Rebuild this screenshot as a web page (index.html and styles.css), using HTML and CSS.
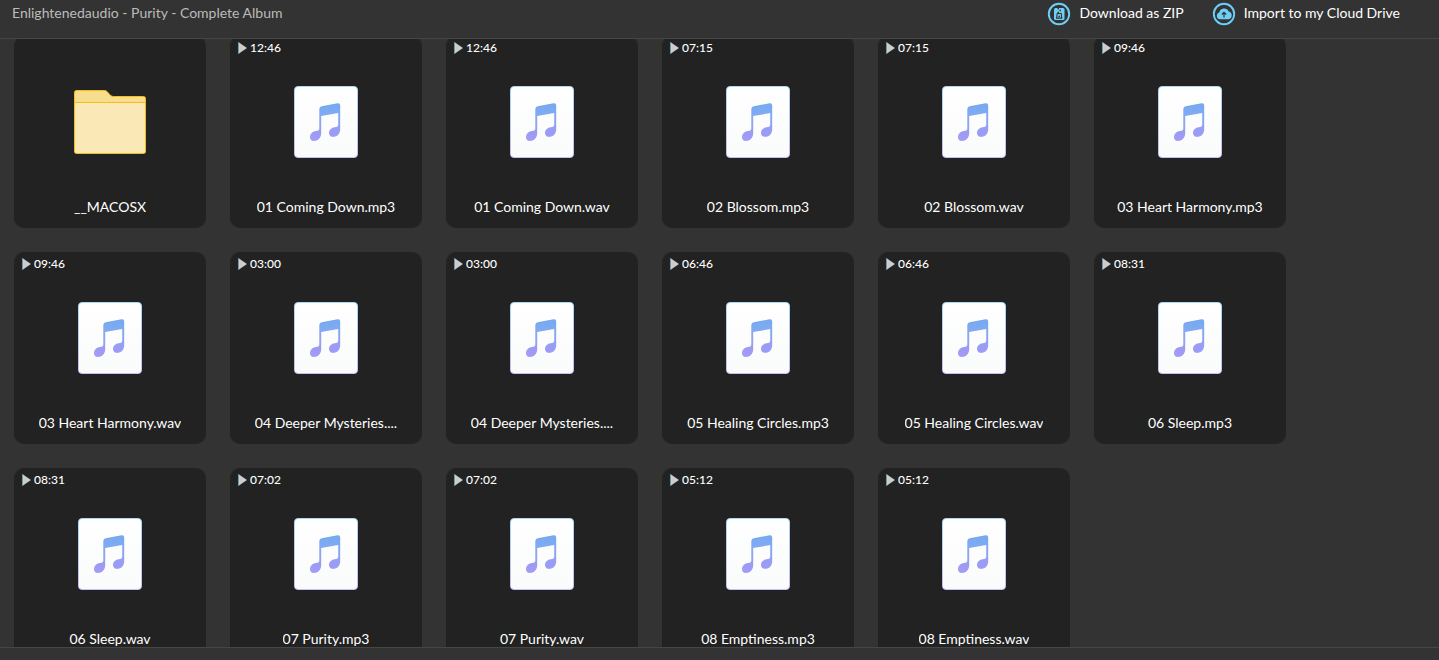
FILE: index.html
```html
<!DOCTYPE html>
<html lang="en">
<head>
<meta charset="utf-8">
<title>Enlightenedaudio - Purity - Complete Album</title>
<link rel="stylesheet" href="styles.css">
</head>
<body>
<svg class="sprite" aria-hidden="true">
  <defs>
    <linearGradient id="note-fill" gradientUnits="userSpaceOnUse" x1="0" y1="17" x2="0" y2="56">
      <stop offset="0" stop-color="#74aaf0"/>
      <stop offset="0.35" stop-color="#84aaf2"/>
      <stop offset="0.75" stop-color="#9b9bf5"/>
      <stop offset="1" stop-color="#a69af7"/>
    </linearGradient>
    <linearGradient id="page-edge" x1="0" y1="0" x2="0" y2="1">
      <stop offset="0" stop-color="#a9d8f5"/>
      <stop offset="1" stop-color="#c9bdf2"/>
    </linearGradient>
    <linearGradient id="page-fill" x1="0" y1="0" x2="0" y2="1">
      <stop offset="0" stop-color="#ffffff"/>
      <stop offset="1" stop-color="#fafbfb"/>
    </linearGradient>
  </defs>
  <symbol id="audio" viewBox="0 0 64 72">
    <rect x="0.5" y="0.5" width="63" height="71" rx="3.5" fill="url(#page-fill)" stroke="url(#page-edge)"/>
    <path fill="url(#note-fill)" d="M25.3 23.200q0-2.400 2.300-2.900L43.500 17.300q2.700-.4 2.700 2.100V43.500C46.200 48 43 50.800 39.400 50.800C36.500 50.800 35 49.300 35 46.900C35 44 37.300 41.700 40.500 41.200L42.400 40.900Q44.200 40.500 44.200 38.700V27L27.200 30.100V47C27.200 51.800 24 55 20 55C17.400 55 16 53.300 16 51.200C16 48 18.500 45.600 22 45.100L23.600 44.800Q25.300 44.400 25.300 42.600Z"/>
  </symbol>
  <symbol id="folder" viewBox="0 0 72 64">
    <path d="M.5 12.500V2.500Q.5.500 2.500.500H30.500C34.500.500 35 6.500 39.500 6.500H69.500Q71.500 6.500 71.500 8.500V12.500Z" fill="#f7dd8e"/>
    <path d="M.5 12.500H71.500V61.500Q71.500 63.500 69.500 63.500H2.500Q.5 63.500.5 61.500Z" fill="#fae9b7"/>
    <path d="M.5 12.500H71.500M.5 2.500Q.5.500 2.500.500H30.500C34.500.500 35 6.500 39.500 6.500H69.500Q71.500 6.500 71.500 8.500V61.500Q71.500 63.500 69.500 63.500H2.500Q.5 63.500.5 61.500Z" fill="none" stroke="#f4bd1b"/>
  </symbol>
  <symbol id="play" viewBox="0 0 9 12">
    <path d="M.3 0L9 6L.3 12Z" fill="#ccc"/>
    <path d="M.3.300V11.700" stroke="#4a9fca" stroke-width=".6"/>
  </symbol>
</svg>

<header class="topbar">
  <h1 class="album">Enlightenedaudio - Purity - Complete Album</h1>
  <div class="actions">
    <button class="action" type="button">
      <svg class="action-icon" viewBox="0 0 24 24" aria-hidden="true">
        <circle cx="12" cy="12" r="10.200" fill="none" stroke="#6dcff6" stroke-width="1.900"/>
        <rect x="7" y="6" width="10.500" height="12" rx="1.500" fill="#6dcff6"/>
        <path d="M10.500 6.500h1.500M12.500 8.500h1.500M10.500 10.500h1.500" stroke="#333" stroke-width="1.300"/>
        <path d="M10.200 11.500h4l.6 4.600h-5.200z" fill="none" stroke="#333" stroke-width="1.100"/>
        <path d="M11.400 14.400h1.600" stroke="#333" stroke-width="1.300"/>
      </svg>
      <span class="action-label">Download as ZIP</span>
    </button>
    <button class="action" type="button">
      <svg class="action-icon" viewBox="0 0 24 24" aria-hidden="true">
        <circle cx="12" cy="12" r="10.200" fill="none" stroke="#6dcff6" stroke-width="1.900"/>
        <path d="M8 17.300a3.500 3.500 0 0 1-.8-6.800A5 5 0 0 1 16.700 9.500a4 4 0 0 1-.2 7.800z" fill="#6dcff6"/>
        <path d="M12 15.500V10.500M9.800 12.500L12 10.300L14.200 12.500" fill="none" stroke="#333" stroke-width="1.200"/>
      </svg>
      <span class="action-label">Import to my Cloud Drive</span>
    </button>
  </div>
</header>

<main class="viewport">
  <ul class="grid">
    <li><a class="tile" href="#"><span class="time"></span><svg class="folder"><use href="#folder"/></svg><span class="name">__MACOSX</span></a></li>
    <li><a class="tile" href="#"><span class="time"><svg class="play"><use href="#play"/></svg>12:46</span><svg class="page"><use href="#audio"/></svg><span class="name">01 Coming Down.mp3</span></a></li>
    <li><a class="tile" href="#"><span class="time"><svg class="play"><use href="#play"/></svg>12:46</span><svg class="page"><use href="#audio"/></svg><span class="name">01 Coming Down.wav</span></a></li>
    <li><a class="tile" href="#"><span class="time"><svg class="play"><use href="#play"/></svg>07:15</span><svg class="page"><use href="#audio"/></svg><span class="name">02 Blossom.mp3</span></a></li>
    <li><a class="tile" href="#"><span class="time"><svg class="play"><use href="#play"/></svg>07:15</span><svg class="page"><use href="#audio"/></svg><span class="name">02 Blossom.wav</span></a></li>
    <li><a class="tile" href="#"><span class="time"><svg class="play"><use href="#play"/></svg>09:46</span><svg class="page"><use href="#audio"/></svg><span class="name">03 Heart Harmony.mp3</span></a></li>
    <li><a class="tile" href="#"><span class="time"><svg class="play"><use href="#play"/></svg>09:46</span><svg class="page"><use href="#audio"/></svg><span class="name">03 Heart Harmony.wav</span></a></li>
    <li><a class="tile" href="#"><span class="time"><svg class="play"><use href="#play"/></svg>03:00</span><svg class="page"><use href="#audio"/></svg><span class="name">04 Deeper Mysteries....</span></a></li>
    <li><a class="tile" href="#"><span class="time"><svg class="play"><use href="#play"/></svg>03:00</span><svg class="page"><use href="#audio"/></svg><span class="name">04 Deeper Mysteries....</span></a></li>
    <li><a class="tile" href="#"><span class="time"><svg class="play"><use href="#play"/></svg>06:46</span><svg class="page"><use href="#audio"/></svg><span class="name">05 Healing Circles.mp3</span></a></li>
    <li><a class="tile" href="#"><span class="time"><svg class="play"><use href="#play"/></svg>06:46</span><svg class="page"><use href="#audio"/></svg><span class="name">05 Healing Circles.wav</span></a></li>
    <li><a class="tile" href="#"><span class="time"><svg class="play"><use href="#play"/></svg>08:31</span><svg class="page"><use href="#audio"/></svg><span class="name">06 Sleep.mp3</span></a></li>
    <li><a class="tile" href="#"><span class="time"><svg class="play"><use href="#play"/></svg>08:31</span><svg class="page"><use href="#audio"/></svg><span class="name">06 Sleep.wav</span></a></li>
    <li><a class="tile" href="#"><span class="time"><svg class="play"><use href="#play"/></svg>07:02</span><svg class="page"><use href="#audio"/></svg><span class="name">07 Purity.mp3</span></a></li>
    <li><a class="tile" href="#"><span class="time"><svg class="play"><use href="#play"/></svg>07:02</span><svg class="page"><use href="#audio"/></svg><span class="name">07 Purity.wav</span></a></li>
    <li><a class="tile" href="#"><span class="time"><svg class="play"><use href="#play"/></svg>05:12</span><svg class="page"><use href="#audio"/></svg><span class="name">08 Emptiness.mp3</span></a></li>
    <li><a class="tile" href="#"><span class="time"><svg class="play"><use href="#play"/></svg>05:12</span><svg class="page"><use href="#audio"/></svg><span class="name">08 Emptiness.wav</span></a></li>
  </ul>
</main>
<footer class="bottombar"></footer>
</body>
</html>
```
FILE: styles.css
```css
* { box-sizing: border-box; }

body {
  margin: 0;
  height: 100vh;
  display: flex;
  flex-direction: column;
  overflow: hidden;
  background: #333;
  color: #fff;
  font-family: Lato, "Liberation Sans", sans-serif;
  font-size: 14px;
  line-height: 20px;
}

.sprite {
  position: absolute;
  width: 0;
  height: 0;
}

.topbar {
  flex: none;
  display: flex;
  justify-content: space-between;
  align-items: flex-start;
  padding: 2px 39px 12px 12px;
  border-bottom: 1px solid #464646;
}

.album {
  margin: 0;
  font-size: 14px;
  font-weight: 400;
  line-height: 22px;
  color: #bbb;
}

.actions {
  display: flex;
  gap: 28px;
}

.action {
  display: flex;
  align-items: flex-start;
  gap: 8px;
  padding: 0;
  border: 0;
  background: none;
  color: #fff;
  font: inherit;
  cursor: pointer;
}

.action-icon {
  width: 24px;
  height: 24px;
}

.action-label {
  line-height: 22px;
}

.viewport {
  flex: 1;
  min-height: 0;
  overflow: hidden;
}

/* The list rests slightly scrolled under the top bar. */
.grid {
  display: grid;
  grid-template-columns: repeat(auto-fill, 192px);
  gap: 24px;
  margin: -3px 0 0;
  padding: 0 100px 24px 14px;
  list-style: none;
}

.tile {
  display: flex;
  flex-direction: column;
  align-items: center;
  justify-content: space-between;
  height: 192px;
  padding: 3px 8px 11px;
  border-radius: 10px;
  background: #222;
  color: #fff;
  text-decoration: none;
}

.time {
  align-self: stretch;
  display: flex;
  align-items: center;
  gap: 3px;
  height: 18px;
  font-size: 12px;
  font-weight: 500;
  line-height: 18px;
}

.play {
  width: 9px;
  height: 12px;
}

.page,
.folder {
  margin-bottom: 10px;
}

.page {
  width: 64px;
  height: 72px;
}

.folder {
  width: 72px;
  height: 64px;
}

.name {
  max-width: 152px;
  overflow: hidden;
  white-space: nowrap;
  text-overflow: ellipsis;
}

.bottombar {
  flex: none;
  height: 13px;
  border-top: 1px solid #464646;
}
```
